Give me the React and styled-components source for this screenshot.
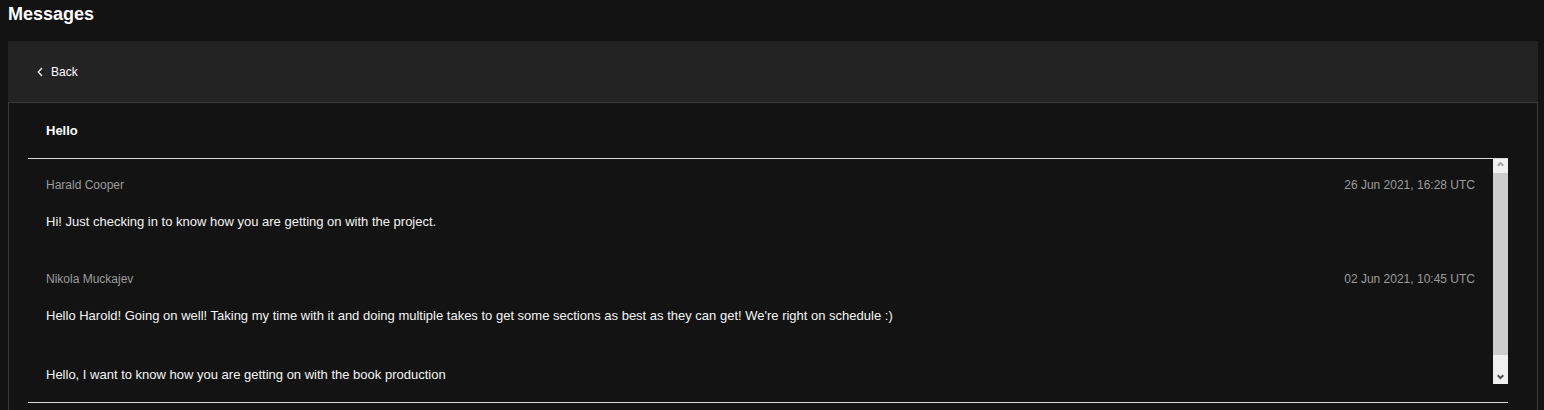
import React from 'react'
import styled, { createGlobalStyle } from 'styled-components'

const GlobalStyle = createGlobalStyle`
    body {
        margin: 0;
        background: #131313;
        font-family: "Liberation Sans", Arial, sans-serif;
        color: #fff;
    }
`

const Page = styled.div`
    padding: 0 6px 0 8px;
`

const PageTitle = styled.h1`
    margin: 0;
    padding: 4px 0 0;
    height: 41px;
    box-sizing: border-box;
    font-family: "Liberation Sans", Arial, sans-serif;
    font-size: 18px;
    font-weight: 700;
    line-height: 21px;
`

const Panel = styled.div`
    display: flex;
    flex-direction: column;
`

const PanelHeader = styled.div`
    display: flex;
    align-items: center;
    height: 61px;
    padding: 0 29px;
    background: #232323;
`

const BackLink = styled.a`
    display: flex;
    align-items: center;
    gap: 8px;
    color: #fff;
    font-size: 12px;
    text-decoration: none;
    cursor: pointer;
`

const PanelBody = styled.div`
    border: 1px solid #3b3b3b;
    border-bottom: none;
    padding: 0 29px 20px 19px;
`

const Subject = styled.div`
    display: flex;
    align-items: center;
    height: 55px;
    padding: 0 18px;
    font-size: 13px;
    font-weight: 700;
    border-bottom: 1px solid #d8d8d8;
`

const Thread = styled.div`
    display: flex;
    height: 225px;
    margin-bottom: 18px;
`

const ThreadContent = styled.div`
    flex: 1;
    overflow: hidden;
`

const ScrollBar = styled.div`
    width: 15px;
    display: flex;
    flex-direction: column;
    background: #f0f0f0;
`

const ScrollButton = styled.div`
    height: ${props => props.h}px;
    display: flex;
    align-items: ${props => props.down ? 'flex-end' : 'flex-start'};
    justify-content: center;
    padding: ${props => props.down ? '0 0 4px' : '2px 0 0'};
    box-sizing: border-box;
    flex-shrink: 0;
`

const ScrollThumb = styled.div`
    height: 182px;
    background: #cdcdcd;
`

const ScrollTrack = styled.div`
    flex: 1;
`

const Divider = styled.div`
    border-top: 1px solid #d8d8d8;
`

const Message = styled.div`
    padding: ${props => props.bare ? '20px 18px 23px' : '18px 18px 23px'};
`

const MessageMeta = styled.div`
    display: flex;
    justify-content: space-between;
    color: #9c9c9c;
    font-size: 12px;
    line-height: 16px;
`

const MessageText = styled.div`
    margin-top: ${props => props.bare ? '0' : '21px'};
    font-size: 13px;
    line-height: 16px;
    color: #f4f4f4;
`

const messages = [
    {
        author: 'Harald Cooper',
        date: '26 Jun 2021, 16:28 UTC',
        text: 'Hi! Just checking in to know how you are getting on with the project.'
    },
    {
        author: 'Nikola Muckajev',
        date: '02 Jun 2021, 10:45 UTC',
        text: "Hello Harold! Going on well! Taking my time with it and doing multiple takes to get some sections as best as they can get! We're right on schedule :)"
    },
    {
        text: 'Hello, I want to know how you are getting on with the book production'
    }
]

const Chevron = () => (
    <svg width="6" height="10" viewBox="0 0 6 10">
        <path d="M5 1 L1.3 5 L5 9" fill="none" stroke="#fff" strokeWidth="1.3" />
    </svg>
)

const Arrow = ({ down, color }) => (
    <svg width="7" height="6" viewBox="0 0 7 6">
        <path
            d={down ? 'M0.7 1.2 L3.5 4 L6.3 1.2' : 'M0.7 4.8 L3.5 2 L6.3 4.8'}
            fill="none"
            stroke={color}
            strokeWidth="2"
        />
    </svg>
)

export default function App() {
    return (
        <Page>
            <GlobalStyle />
            <PageTitle>Messages</PageTitle>
            <Panel>
                <PanelHeader>
                    <BackLink>
                        <Chevron />
                        Back
                    </BackLink>
                </PanelHeader>
                <PanelBody>
                    <Subject>Hello</Subject>
                    <Thread>
                        <ThreadContent>
                            {messages.map((m, i) => (
                                <Message key={i} bare={!m.author}>
                                    {m.author && (
                                        <MessageMeta>
                                            <span>{m.author}</span>
                                            <span>{m.date}</span>
                                        </MessageMeta>
                                    )}
                                    <MessageText bare={!m.author}>{m.text}</MessageText>
                                </Message>
                            ))}
                        </ThreadContent>
                        <ScrollBar>
                            <ScrollButton h={14}>
                                <Arrow color="#a3a3a3" />
                            </ScrollButton>
                            <ScrollThumb />
                            <ScrollTrack />
                            <ScrollButton h={16} down>
                                <Arrow down color="#505050" />
                            </ScrollButton>
                        </ScrollBar>
                    </Thread>
                    <Divider />
                </PanelBody>
            </Panel>
        </Page>
    )
}
